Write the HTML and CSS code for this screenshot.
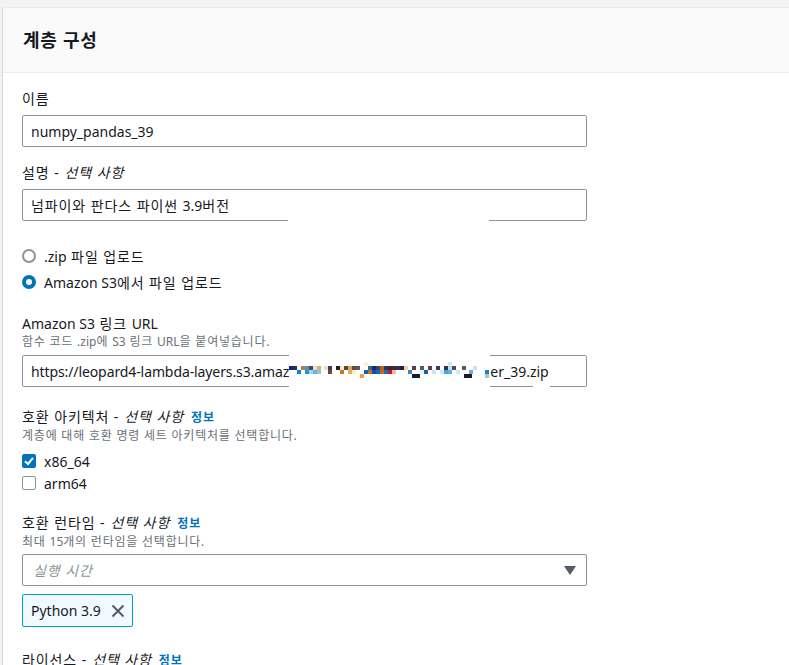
FILE: index.html
```html
<!DOCTYPE html>
<html lang="ko">
<head>
<meta charset="utf-8">
<title>계층 구성</title>
<link rel="stylesheet" href="styles.css">
</head>
<body>
<div class="panel">
  <div class="panel-header"><h2 class="title ko">계층 구성</h2></div>
  <div class="panel-body">
    <div class="field">
      <div class="label ko">이름</div>
      <div class="input">numpy_pandas_39</div>
    </div>
    <div class="field field-gap">
      <div class="label ko">설명 -<i>선택 사항</i></div>
      <div class="input input-rel"><span class="ko">넘파이와 판다스 파이썬 </span>3.9<span class="ko">버전</span><span class="mask mask-desc"></span></div>
    </div>
    <div class="radios">
      <div class="choice"><span class="radio"></span><span>.zip<span class="ko"> 파일 업로드</span></span></div>
      <div class="choice"><span class="radio radio-on"></span><span>Amazon S3<span class="ko">에서 파일 업로드</span></span></div>
    </div>
    <div class="field field-s3">
      <div class="label">Amazon S3<span class="ko"> 링크 </span>URL</div>
      <div class="desc desc-s3"><span class="ko">함수 코드 </span>.zip<span class="ko">에 </span>S3<span class="ko"> 링크 </span>URL<span class="ko">을 붙여넣습니다.</span></div>
      <div class="input input-url">
        <span class="url-head">https://leopard4-lambda-layers.s3.amaz</span>
        <span class="redact">
          <svg class="pix" width="201" height="16" viewBox="0 0 201 16" shape-rendering="crispEdges">
            <rect x="75" y="0" width="4" height="4" fill="#f8f0d8"/>
            <rect x="159" y="0" width="4" height="4" fill="#d0e8f8"/>
            <rect x="0" y="4" width="4" height="4" fill="#1e1e8c"/>
            <rect x="4" y="4" width="4" height="4" fill="#1a3a5a"/>
            <rect x="12" y="4" width="4" height="4" fill="#a08060"/>
            <rect x="16" y="4" width="4" height="4" fill="#5a90c0"/>
            <rect x="20" y="4" width="4" height="4" fill="#3a5060"/>
            <rect x="24" y="4" width="4" height="4" fill="#e0e0e0"/>
            <rect x="28" y="4" width="4" height="4" fill="#e0b070"/>
            <rect x="35" y="4" width="4" height="4" fill="#f0e0d0"/>
            <rect x="39" y="4" width="4" height="4" fill="#4a3070"/>
            <rect x="47" y="4" width="4" height="4" fill="#2a1a2a"/>
            <rect x="51" y="4" width="4" height="4" fill="#f0e8d0"/>
            <rect x="55" y="4" width="4" height="4" fill="#5a4a2a"/>
            <rect x="59" y="4" width="4" height="4" fill="#e0a060"/>
            <rect x="63" y="4" width="4" height="4" fill="#6a4a3a"/>
            <rect x="67" y="4" width="4" height="4" fill="#5a5a5a"/>
            <rect x="79" y="4" width="4" height="4" fill="#2a6aa0"/>
            <rect x="83" y="4" width="4" height="4" fill="#1a2a5a"/>
            <rect x="87" y="4" width="4" height="4" fill="#1a4a8a"/>
            <rect x="91" y="4" width="4" height="4" fill="#c06020"/>
            <rect x="95" y="4" width="4" height="4" fill="#1a3a6a"/>
            <rect x="99" y="4" width="4" height="4" fill="#5a1a2a"/>
            <rect x="103" y="4" width="4" height="4" fill="#3a2a3a"/>
            <rect x="107" y="4" width="4" height="4" fill="#3a2a5a"/>
            <rect x="111" y="4" width="4" height="4" fill="#2a1a4a"/>
            <rect x="115" y="4" width="4" height="4" fill="#f0d0a0"/>
            <rect x="123" y="4" width="4" height="4" fill="#6a3a3a"/>
            <rect x="131" y="4" width="4" height="4" fill="#5a5a5a"/>
            <rect x="139" y="4" width="4" height="4" fill="#6a3a4a"/>
            <rect x="147" y="4" width="4" height="4" fill="#3a3a5a"/>
            <rect x="155" y="4" width="4" height="4" fill="#1a3a4a"/>
            <rect x="159" y="4" width="4" height="4" fill="#c0e0f0"/>
            <rect x="163" y="4" width="4" height="4" fill="#4a4a4a"/>
            <rect x="173" y="4" width="4" height="4" fill="#5a5a5a"/>
            <rect x="184" y="4" width="4" height="4" fill="#c8e0f0"/>
            <rect x="8" y="8" width="4" height="4" fill="#1a80d0"/>
            <rect x="16" y="8" width="4" height="4" fill="#2a90d0"/>
            <rect x="20" y="8" width="4" height="4" fill="#a0d8f0"/>
            <rect x="24" y="8" width="4" height="4" fill="#70b0e0"/>
            <rect x="28" y="8" width="4" height="4" fill="#90c8c0"/>
            <rect x="39" y="8" width="4" height="4" fill="#7a4a20"/>
            <rect x="51" y="8" width="4" height="4" fill="#c07a20"/>
            <rect x="59" y="8" width="4" height="4" fill="#e0b060"/>
            <rect x="63" y="8" width="4" height="4" fill="#f8f0c0"/>
            <rect x="75" y="8" width="4" height="4" fill="#1a60b0"/>
            <rect x="79" y="8" width="4" height="4" fill="#c07030"/>
            <rect x="83" y="8" width="4" height="4" fill="#1a4a9a"/>
            <rect x="87" y="8" width="4" height="4" fill="#1a60b0"/>
            <rect x="91" y="8" width="4" height="4" fill="#c0682a"/>
            <rect x="95" y="8" width="4" height="4" fill="#2a6ab0"/>
            <rect x="99" y="8" width="4" height="4" fill="#c01a2a"/>
            <rect x="103" y="8" width="4" height="4" fill="#f0c090"/>
            <rect x="119" y="8" width="4" height="4" fill="#3a8ad0"/>
            <rect x="131" y="8" width="4" height="4" fill="#e0f0ff"/>
            <rect x="135" y="8" width="4" height="4" fill="#1a60b0"/>
            <rect x="143" y="8" width="4" height="4" fill="#c0e8f8"/>
            <rect x="151" y="8" width="4" height="4" fill="#d0e8f8"/>
            <rect x="155" y="8" width="4" height="4" fill="#4aa0e0"/>
            <rect x="159" y="8" width="4" height="4" fill="#60b0e0"/>
            <rect x="167" y="8" width="4" height="4" fill="#d0e8f8"/>
            <rect x="180" y="8" width="4" height="4" fill="#60b0e0"/>
            <rect x="196" y="8" width="4" height="4" fill="#1a80d0"/>
            <rect x="71" y="12" width="4" height="4" fill="#e0a050"/>
            <rect x="123" y="12" width="8" height="4" fill="#1a1a2a"/>
            <rect x="175" y="12" width="8" height="4" fill="#1a1a2a"/>
            <rect x="196" y="12" width="4" height="4" fill="#90d0c0"/>
          </svg>
        </span>
        <span class="url-tail">er_39.zip</span>
        <span class="mask mask-url"></span>
      </div>
    </div>
    <div class="field field-arch">
      <div class="label ko">호환 아키텍처 -<i>선택 사항</i><a class="info">정보</a></div>
      <div class="desc desc-arch ko">계층에 대해 호환 명령 세트 아키텍처를 선택합니다.</div>
      <div class="checks">
        <div class="check-row">
          <span class="box box-on"><svg width="14" height="14" viewBox="0 0 14 14"><polyline points="3,7.2 6,10 11,3.8" fill="none" stroke="#fff" stroke-width="2"/></svg></span>
          <span>x86_64</span>
        </div>
        <div class="check-row"><span class="box"></span><span>arm64</span></div>
      </div>
    </div>
    <div class="field field-runtime">
      <div class="label ko">호환 런타임 -<i>선택 사항</i><a class="info">정보</a></div>
      <div class="desc desc-runtime"><span class="ko">최대 </span>15<span class="ko">개의 런타임을 선택합니다.</span></div>
      <div class="input select">
        <span class="placeholder ko">실행 시간</span>
        <svg class="caret" width="12" height="9" viewBox="0 0 12 9"><polygon points="0,0 12,0 6,9" fill="#545b64"/></svg>
      </div>
      <div class="token">
        <span class="token-text">Python 3.9</span>
        <svg class="dismiss" width="14" height="14" viewBox="0 0 14 14"><path d="M1.5 1.5 L12.5 12.5 M12.5 1.5 L1.5 12.5" stroke="#545b64" stroke-width="2" fill="none"/></svg>
      </div>
    </div>
    <div class="field field-license">
      <div class="label ko">라이선스 -<i>선택 사항</i><a class="info">정보</a></div>
    </div>
  </div>
</div>
</body>
</html>
```

FILE: styles.css
```css
html, body {
  margin: 0;
  padding: 0;
}
body {
  background: #f2f3f3;
  font-family: "Noto Sans", "Noto Sans CJK KR", sans-serif;
  color: #16191f;
  font-size: 14px;
  overflow: hidden;
  height: 665px;
}
.ko {
  letter-spacing: 0.065em;
}
.panel {
  margin: 7px 0 0 2px;
  width: 820px;
  border-top: 1px solid #eaeded;
  border-left: 1px solid #d5dbdb;
  background: #ffffff;
  height: 700px;
}
.panel-header {
  background: #fafafa;
  height: 64px;
  border-bottom: 1px solid #eaeded;
  display: flex;
  align-items: center;
  padding: 0 20px;
}
.title {
  margin: 0;
  font-size: 18px;
  font-weight: 700;
  line-height: 22px;
  color: #16191f;
  letter-spacing: 0.04em;
}
.panel-body {
  padding: 16px 19px 0 19px;
}
.field {
  display: flex;
  flex-direction: column;
  align-items: flex-start;
}
.label {
  line-height: 20px;
  margin-bottom: 6px;
  display: flex;
  align-items: baseline;
  white-space: pre;
}
.label i {
  font-style: italic;
  margin-left: 5px;
}
.info {
  color: #0073bb;
  font-size: 12px;
  font-weight: 700;
  margin-left: 7px;
}
.desc {
  font-size: 12px;
  line-height: 16px;
  color: #687078;
  white-space: pre;
}
.field-gap { margin-top: 16px; }
.input {
  box-sizing: border-box;
  width: 565px;
  height: 32px;
  border: 1px solid #879596;
  border-radius: 2px;
  padding: 0 8px;
  display: flex;
  align-items: center;
  white-space: pre;
  background: #fff;
}
.input-rel { position: relative; }
.mask {
  position: absolute;
  background: #fff;
}
.mask-desc {
  left: 265px;
  bottom: -1px;
  width: 201px;
  height: 1px;
}
.radios {
  margin-top: 22px;
  display: flex;
  flex-direction: column;
}
.choice {
  height: 26px;
  display: flex;
  align-items: center;
  gap: 8px;
  white-space: pre;
}
.radio {
  box-sizing: border-box;
  width: 14px;
  height: 14px;
  border-radius: 50%;
  border: 2px solid #879596;
  background: #fff;
}
.radio-on {
  border: 4.5px solid #0073bb;
}
.field-s3 { margin-top: 19px; }
.field-s3 .label { margin-bottom: 0; }
.desc-s3 { margin-bottom: 5px; }
.input-url {
  position: relative;
  padding-right: 0;
}
.url-head {
  flex: none;
  letter-spacing: -0.1px;
}
.redact {
  flex: none;
  align-self: stretch;
  width: 201px;
  margin: -1px 0;
  background: #fff;
  display: flex;
  align-items: flex-start;
}
.pix {
  display: block;
  margin-top: 7px;
}
.url-tail { flex: none; }
.mask-url {
  left: 510px;
  bottom: -1px;
  width: 17px;
  height: 1px;
}
.field-arch { margin-top: 20px; }
.field-arch .label { margin-bottom: 0; }
.desc-arch { margin-bottom: 6px; }
.checks {
  display: flex;
  flex-direction: column;
}
.check-row {
  height: 22px;
  display: flex;
  align-items: center;
  gap: 8px;
}
.box {
  box-sizing: border-box;
  width: 14px;
  height: 14px;
  border: 1.5px solid #879596;
  border-radius: 2px;
  background: #fff;
  display: flex;
}
.box-on {
  border: none;
  background: #0073bb;
}
.field-runtime { margin-top: 19px; }
.field-runtime .label { margin-bottom: 0; }
.desc-runtime { margin-bottom: 4px; }
.select {
  justify-content: space-between;
  padding: 0 10px 0 10px;
}
.placeholder {
  color: #879596;
  font-style: italic;
}
.token {
  margin-top: 8px;
  box-sizing: border-box;
  height: 33px;
  width: 111px;
  border: 1px solid #00a1c9;
  border-radius: 2px;
  background: #f1faff;
  display: flex;
  align-items: center;
  padding: 0 8px;
  gap: 10px;
  white-space: nowrap;
}
.token-text { flex: none; }
.dismiss { flex: none; }
.field-license { margin-top: 23px; }
```
